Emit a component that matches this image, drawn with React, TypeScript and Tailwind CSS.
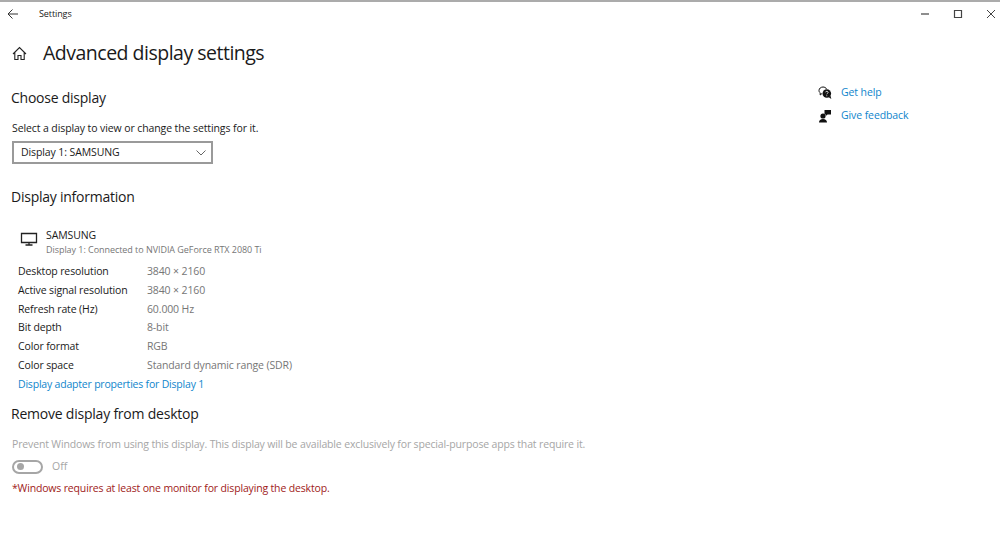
import React from 'react';

const rows = [
  ['Desktop resolution', '3840 × 2160'],
  ['Active signal resolution', '3840 × 2160'],
  ['Refresh rate (Hz)', '60.000 Hz'],
  ['Bit depth', '8-bit'],
  ['Color format', 'RGB'],
  ['Color space', 'Standard dynamic range (SDR)'],
];

const App: React.FC = () => {
  return (
    <div className="w-[1000px] h-[550px] overflow-hidden bg-white text-[#1a1a1a] font-['Open_Sans',sans-serif] border-t-2 border-[#ababab]">
      {/* Title bar */}
      <div className="flex items-center h-[24px] pl-[7px] pr-[4px]">
        <svg width="12" height="12" viewBox="0 0 12 12" fill="none" stroke="#333" strokeWidth="1">
          <path d="M11 6H1M5.500 1.500 1 6l4.500 4.500" />
        </svg>
        <span className="ml-[20px] text-[9px] tracking-[-0.1px]">Settings</span>
        <div className="ml-auto flex items-center gap-[23px]">
          <svg width="10" height="10" viewBox="0 0 10 10" stroke="#444" strokeWidth="1.200"><path d="M1 5h8" /></svg>
          <svg width="10" height="10" viewBox="0 0 10 10" fill="none" stroke="#444" strokeWidth="1.200"><path d="M1.500 1.500h7v7h-7z" /></svg>
          <svg width="10" height="10" viewBox="0 0 10 10" stroke="#444" strokeWidth="1"><path d="M1 1l8 8M9 1l-8 8" /></svg>
        </div>
      </div>

      <div className="flex">
        <div className="w-[812px] pl-[12px]">
          {/* Page heading */}
          <div className="flex items-center h-[30px] mt-[12px]">
            <svg width="15" height="15" viewBox="0 0 15 15" fill="none" stroke="#222" strokeWidth="1.100">
              <path d="M1 8 7.500 1.500 14 8M2.800 6.500V13.500H6V9.500H9V13.500H12.200V6.500" />
            </svg>
            <h1 className="ml-[16px] text-[19.500px] leading-[30px] tracking-[-0.5px]">Advanced display settings</h1>
          </div>

          <h2 className="mt-[20px] -ml-px text-[14px] leading-[20px] tracking-[-0.24px]">Choose display</h2>
          <p className="mt-[12px] text-[10.500px] leading-[16px] tracking-[-0.1px]">Select a display to view or change the settings for it.</p>
          <div className="mt-[5px] flex items-center justify-between w-[201px] h-[23px] border-2 border-[#9a9a9a] pl-[7px] pr-[5px] text-[10.500px] tracking-[-0.1px]">
            <span>Display 1: SAMSUNG</span>
            <svg width="10" height="6" viewBox="0 0 10 6" fill="none" stroke="#666" strokeWidth="1"><path d="M.5 .5 5 5l4.500-4.500" /></svg>
          </div>

          <h2 className="mt-[23px] -ml-px text-[14px] leading-[20px] tracking-[-0.24px]">Display information</h2>

          <div className="flex mt-[21px] pl-[8px]">
            <svg className="mt-[4px]" width="18" height="15" viewBox="0 0 18 15" fill="none" stroke="#222" strokeWidth="1.300">
              <path d="M1.500 1.500h15v9h-15zM9 10.500v2.500M5.500 13h7" />
            </svg>
            <div className="ml-[8px]">
              <div className="text-[10.500px] leading-[14px] tracking-[-0.1px]">SAMSUNG</div>
              <div className="mt-[1px] text-[9px] leading-[14px] text-[#767676] tracking-[-0.05px]">Display 1: Connected to NVIDIA GeForce RTX 2080 Ti</div>
            </div>
          </div>

          <div className="mt-[5.700px] pl-[6px]">
            {rows.map(([label, value]) => (
              <div key={label} className="flex h-[18.700px] items-center text-[10.500px] tracking-[-0.13px]">
                <span className="w-[129px]">{label}</span>
                <span className="text-[#767676]">{value}</span>
              </div>
            ))}
            <a className="block h-[18.700px] leading-[18.700px] text-[10.500px] text-[#0f85cc] tracking-[-0.2px]">Display adapter properties for Display 1</a>
          </div>

          <h2 className="mt-[10.300px] -ml-px text-[14px] leading-[20px] tracking-[-0.22px]">Remove display from desktop</h2>
          <p className="mt-[12px] text-[10.500px] leading-[16px] text-[#a6a6a6] tracking-[-0.15px] whitespace-nowrap">Prevent Windows from using this display. This display will be available exclusively for special-purpose apps that require it.</p>
          <div className="flex items-center mt-[7px]">
            <div className="flex items-center w-[31px] h-[14px] rounded-full border-2 border-[#a6a6a6] pl-[3px]">
              <div className="size-[7px] rounded-full bg-[#a6a6a6]" />
            </div>
            <span className="ml-[9px] text-[10.500px] text-[#a6a6a6]">Off</span>
          </div>
          <p className="mt-[5px] text-[10.500px] leading-[16px] text-[#a01a20] tracking-[-0.16px]">*Windows requires at least one monitor for displaying the desktop.</p>
        </div>

        {/* Side links */}
        <div className="pl-[6px] pt-[55px]">
          <div className="flex items-center h-[23px]">
            <svg width="14" height="14" viewBox="0 0 14 14">
              <path d="M4 7.500 2.200 9V6.800C1.300 6.200 1 5.400 1 4.500 1 2.500 2.800 1 5 1c1.600 0 3 .8 3.600 2" fill="none" stroke="#111" strokeWidth="1" />
              <circle cx="8.800" cy="7.500" r="4.300" fill="#111" />
              <path d="M10.500 11l2.800 2-.8-3.200z" fill="#111" />
              <path d="M7.500 6.300c.1-1.300 2.600-1.300 2.600.1 0 1-1.300 1-1.300 1.900" fill="none" stroke="#fff" strokeWidth=".8" />
              <circle cx="8.800" cy="9.700" r=".5" fill="#fff" />
            </svg>
            <a className="ml-[9px] text-[10.500px] text-[#0f85cc] tracking-[-0.1px]">Get help</a>
          </div>
          <div className="flex items-center h-[23px]">
            <svg width="14" height="14" viewBox="0 0 14 14" fill="#111">
              <circle cx="5" cy="7" r="2.600" />
              <path d="M1 13.500c0-2.400 1.500-3.600 4-3.600s4 1.200 4 3.600zM6.500 1H13v4.500H9.500L7.800 7V5.500H6.500z" />
            </svg>
            <a className="ml-[9px] text-[10.500px] text-[#0f85cc] tracking-[-0.1px]">Give feedback</a>
          </div>
        </div>
      </div>
    </div>
  );
};

export default App;
